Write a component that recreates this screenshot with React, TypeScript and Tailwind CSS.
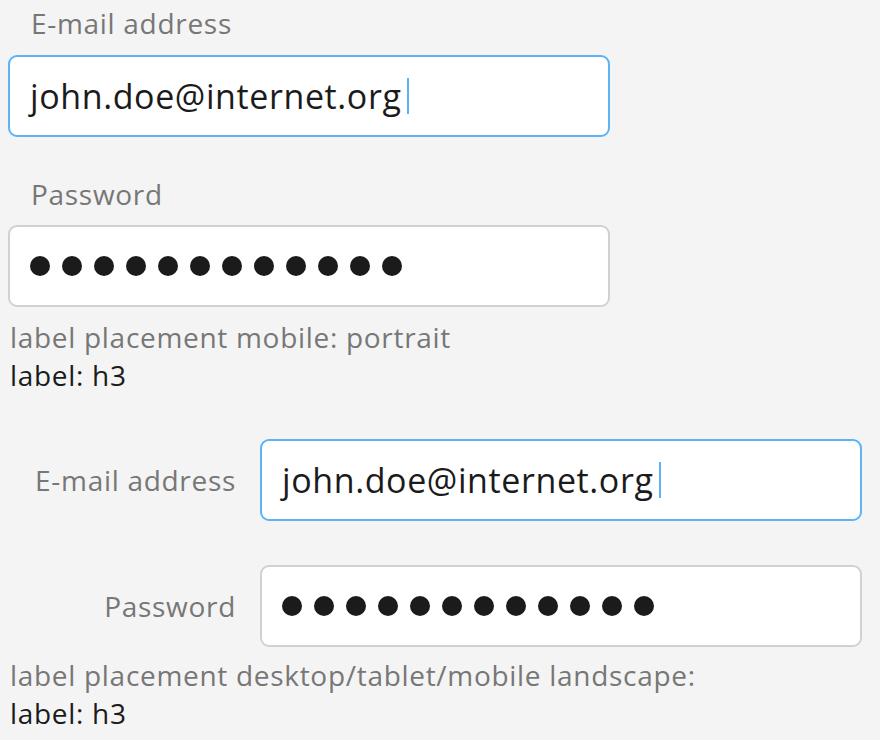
import React from "react"

const font = { fontFamily: '"Open Sans", "Noto Sans", sans-serif' }

function Caret() {
  return <span className="inline-block w-[2px] h-[36px] bg-[#5cb3f6] ml-[6px] align-middle" />
}

function Dots({ count }: { count: number }) {
  return (
    <div className="flex items-center gap-3">
      {Array.from({ length: count }).map((_, i) => (
        <span key={i} className="block w-5 h-5 rounded-full bg-[#1b1b1b]" />
      ))}
    </div>
  )
}

function Field({ focused, children }: { focused?: boolean; children: React.ReactNode }) {
  return (
    <div
      className={`w-[602px] h-[82px] shrink-0 rounded-[9px] bg-white border-2 flex items-center pl-[20px] text-[34px] tracking-[0.6px] text-[#1b1b1b] ${
        focused ? "border-[#5cb3f6]" : "border-[#d1d1d1]"
      }`}
    >
      {children}
    </div>
  )
}

export default function App() {
  return (
    <div className="min-h-[740px] bg-[#f4f4f4] pl-[8px] pt-[5px] text-[28px] leading-[36px] tracking-[0.7px]" style={font}>
      {/* stacked labels */}
      <div className="flex flex-col">
        <label className="pl-[23px] text-[#777] mb-[14px]">E-mail address</label>
        <Field focused>
          <span>john.doe@internet.org</span>
          <Caret />
        </Field>
        <label className="pl-[23px] mt-[39px] text-[#777] mb-[13px]">Password</label>
        <Field>
          <Dots count={12} />
        </Field>
        <div className="mt-[11px] pl-[2px] leading-[38px]">
          <p className="text-[#777]">label placement mobile: portrait</p>
          <p className="text-[#1b1b1b]">label: h3</p>
        </div>
      </div>

      {/* inline labels */}
      <div className="flex flex-col gap-[44px] mt-[45px]">
        <div className="flex items-center gap-[24px]">
          <label className="w-[228px] text-right text-[#777]">E-mail address</label>
          <Field focused>
            <span>john.doe@internet.org</span>
            <Caret />
          </Field>
        </div>
        <div className="flex items-center gap-[24px]">
          <label className="w-[228px] text-right text-[#777]">Password</label>
          <Field>
            <Dots count={12} />
          </Field>
        </div>
      </div>
      <div className="mt-[9px] pl-[2px] leading-[38px]">
        <p className="text-[#777]">label placement desktop/tablet/mobile landscape:</p>
        <p className="text-[#1b1b1b]">label: h3</p>
      </div>
    </div>
  )
}
